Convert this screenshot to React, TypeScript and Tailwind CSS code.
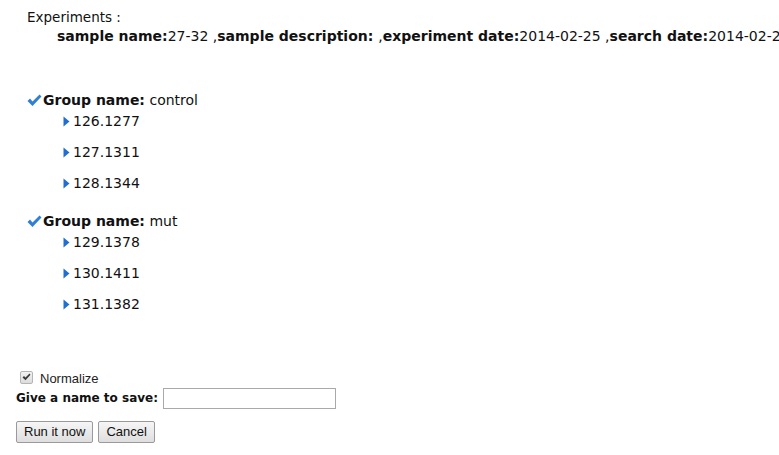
import React from "react";

const groups = [
  { name: "control", samples: ["126.1277", "127.1311", "128.1344"] },
  { name: "mut", samples: ["129.1378", "130.1411", "131.1382"] },
];

function Check() {
  return (
    <svg width="15" height="13" viewBox="0 0 15 13" className="shrink-0">
      <path d="M0.5 7 L3 4.5 L5.5 7.5 L12.5 0.5 L14.5 2.5 L5.5 12 Z" fill="#2f7fd6" />
    </svg>
  );
}

function Arrow() {
  return (
    <svg width="7" height="11" viewBox="0 0 7 11" className="shrink-0">
      <path d="M0.5 0.5 L6.5 5.5 L0.5 10.5 Z" fill="#1f6fd1" />
    </svg>
  );
}

export default function App() {
  return (
    <div className="w-[779px] h-[455px] bg-white text-[#111] font-['DejaVu_Sans',Verdana,sans-serif] text-[14px] overflow-hidden">
      {/* Experiments header */}
      <div className="pt-[8px] pl-[27px] leading-[19px]">
        <div className="text-[13.5px]">Experiments :</div>
        <div className="pl-[30px] whitespace-nowrap">
          <b>sample name:</b>27-32 ,<b>sample description: </b>,<b>experiment date:</b>2014-02-25 ,
          <b>search date:</b>2014-02-27
        </div>
      </div>

      {/* Groups */}
      <div className="pt-[44px] pl-[27px]">
        {groups.map((g) => (
          <div key={g.name} className="mb-[8px]">
            <div className="flex items-center h-[20px]">
              <Check />
              <span className="ml-[1px]">
                <b>Group name:</b> {g.name}
              </span>
            </div>
            <div className="pl-[36px]">
              {g.samples.map((s) => (
                <div key={s} className="flex items-center h-[31px] pb-[8px]">
                  <Arrow />
                  <span className="ml-[3px] leading-[17px]">{s}</span>
                </div>
              ))}
            </div>
          </div>
        ))}
      </div>

      {/* Form */}
      <div className="pt-[37px] pl-[16px]">
        <label className="flex items-center pl-[4px] h-[16px] font-['Liberation_Sans',Arial,sans-serif] text-[13px] text-[#222]">
          <span className="flex items-center justify-center w-[13px] h-[13px] border border-[#b5b5b5] rounded-[2px] bg-gradient-to-b from-[#f2f2f2] to-[#dcdcdc]">
            <svg width="9" height="8" viewBox="0 0 9 8">
              <path d="M0.5 4.5 L2 3 L3.5 4.5 L7.5 0.5 L8.5 1.8 L3.5 7.2 Z" fill="#3a3a3a" />
            </svg>
          </span>
          <span className="ml-[7px] mt-[3px]">Normalize</span>
        </label>
        <div className="flex items-center mt-[2px] h-[22px]">
          <b className="text-[12px]">Give a name to save:</b>
          <input type="text" className="ml-[5px] w-[173px] h-[21px] border border-[#a9a9a9] bg-white" />
        </div>
        <div className="flex mt-[12px] gap-[5px] font-['Liberation_Sans',Arial,sans-serif] text-[13px]">
          <button className="h-[22px] px-[7px] border border-[#9a9a9a] rounded-[2px] bg-gradient-to-b from-[#f6f6f6] to-[#dedede] text-[#111]">
            Run it now
          </button>
          <button className="h-[22px] px-[7px] border border-[#9a9a9a] rounded-[2px] bg-gradient-to-b from-[#f6f6f6] to-[#dedede] text-[#111]">
            Cancel
          </button>
        </div>
      </div>
    </div>
  );
}
